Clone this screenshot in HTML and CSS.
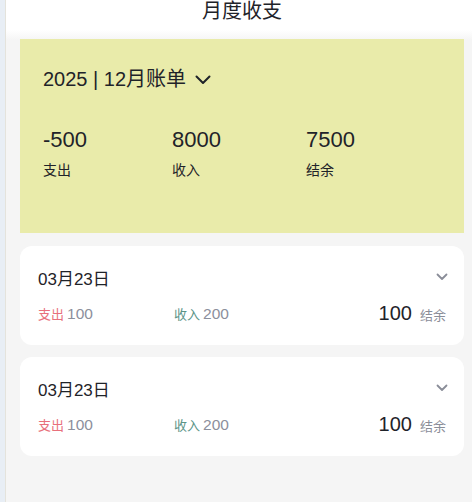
FILE: index.html
```html
<!DOCTYPE html>
<html lang="zh-CN">
<head>
  <meta charset="UTF-8" />
  <meta name="viewport" content="width=device-width, initial-scale=1.0"/>
  <title>月度收支</title>
  <link rel="stylesheet" href="styles.css">
</head>
<body>

<!-- left edge of the side panel -->
<div class="edge"></div>

<div class="page">
  <header class="page-header">
    <h1>月度收支</h1>
  </header>

  <!-- Month summary -->
  <section class="summary">
    <div class="summary-title">
      <span>2025 | 12月账单</span>
      <svg class="chev-big" width="16" height="10" viewBox="0 0 16 10">
        <path d="M1.5 1.5 L8 8 L14.5 1.5" fill="none" stroke="#1f2329" stroke-width="2" stroke-linecap="round" stroke-linejoin="round"/>
      </svg>
    </div>
    <div class="summary-stats">
      <div class="stat">
        <div class="stat-num">-500</div>
        <div class="stat-label">支出</div>
      </div>
      <div class="stat">
        <div class="stat-num">8000</div>
        <div class="stat-label">收入</div>
      </div>
      <div class="stat">
        <div class="stat-num">7500</div>
        <div class="stat-label">结余</div>
      </div>
    </div>
  </section>

  <!-- Daily list -->
  <div class="day-list">
    <div class="day-card">
      <div class="day-head">
        <span class="day-date">03月23日</span>
        <svg class="chev" width="12" height="8" viewBox="0 0 12 8">
          <path d="M1.5 1.5 L6 6 L10.5 1.5" fill="none" stroke="#8a8d98" stroke-width="1.8" stroke-linecap="round" stroke-linejoin="round"/>
        </svg>
      </div>
      <div class="day-row">
        <div class="day-cell"><span class="tag out">支出</span><span class="amt">100</span></div>
        <div class="day-cell"><span class="tag in">收入</span><span class="amt">200</span></div>
        <div class="day-cell right"><span class="bal">100</span><span class="tag rest">结余</span></div>
      </div>
    </div>

    <div class="day-card">
      <div class="day-head">
        <span class="day-date">03月23日</span>
        <svg class="chev" width="12" height="8" viewBox="0 0 12 8">
          <path d="M1.5 1.5 L6 6 L10.5 1.5" fill="none" stroke="#8a8d98" stroke-width="1.8" stroke-linecap="round" stroke-linejoin="round"/>
        </svg>
      </div>
      <div class="day-row">
        <div class="day-cell"><span class="tag out">支出</span><span class="amt">100</span></div>
        <div class="day-cell"><span class="tag in">收入</span><span class="amt">200</span></div>
        <div class="day-cell right"><span class="bal">100</span><span class="tag rest">结余</span></div>
      </div>
    </div>
  </div>
</div>

</body>
</html>
```

FILE: styles.css
```css
* {
  margin: 0;
  padding: 0;
  box-sizing: border-box;
}

body {
  display: flex;
  min-height: 100vh;
  background-color: #f5f5f5;
  font-family: "Liberation Sans", "Noto Sans CJK SC", sans-serif;
  color: #1f2329;
}

.edge {
  width: 6px;
  flex-shrink: 0;
  background-color: #e8eef5;
  border-right: 1px solid #e4e3dc;
}

.page {
  flex: 1;
  padding: 0 8px 40px 14px;
  background: linear-gradient(#ffffff 0, #ffffff 30px, #f5f5f5 40px);
}

.page-header h1 {
  font-size: 20px;
  font-weight: normal;
  line-height: 22px;
  text-align: center;
  margin-bottom: 17px;
}

/* summary block */
.summary {
  background-color: #e9ebaa;
  padding: 27px 23px 53px;
}

.summary-title {
  display: flex;
  align-items: center;
  gap: 9px;
  font-size: 20px;
  line-height: 26px;
}

.chev-big {
  margin-top: 1px;
}

.summary-stats {
  display: flex;
  gap: 85px;
  margin-top: 35px;
}

.stat-num {
  font-size: 22px;
  line-height: 26px;
}

.stat-label {
  font-size: 14px;
  line-height: 20px;
  margin-top: 7px;
}

/* day cards */
.day-list {
  display: flex;
  flex-direction: column;
  gap: 12px;
  margin-top: 13px;
}

.day-card {
  background-color: #ffffff;
  border-radius: 12px;
  padding: 18px 18px 19px;
}

.day-head {
  display: flex;
  align-items: center;
  justify-content: space-between;
  height: 26px;
}

.day-date {
  font-size: 17px;
}

.chev {
  margin-right: -2px;
}

.day-row {
  display: flex;
  align-items: center;
  height: 26px;
  margin-top: 10px;
}

.day-cell {
  flex: 1;
  display: flex;
  align-items: baseline;
  gap: 3px;
}

.day-cell.right {
  justify-content: flex-end;
  gap: 8px;
}

.tag {
  font-size: 13px;
}

.tag.out {
  color: #e8707c;
}

.tag.in {
  color: #5b9488;
}

.tag.rest {
  color: #8a8d98;
}

.amt {
  font-size: 15.5px;
  color: #8c8f9c;
}

.bal {
  font-size: 20px;
  color: #1f2329;
}
```
